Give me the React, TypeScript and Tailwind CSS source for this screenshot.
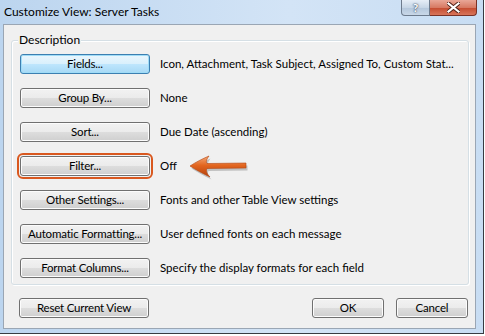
import React from "react";

type Row = { label: string; value: string; focused?: boolean; marked?: boolean };

const rows: Row[] = [
  { label: "Fields...", value: "Icon, Attachment, Task Subject, Assigned To, Custom Stat...", focused: true },
  { label: "Group By...", value: "None" },
  { label: "Sort...", value: "Due Date (ascending)" },
  { label: "Filter...", value: "Off", marked: true },
  { label: "Other Settings...", value: "Fonts and other Table View settings" },
  { label: "Automatic Formatting...", value: "User defined fonts on each message" },
  { label: "Format Columns...", value: "Specify the display formats for each field" },
];

const WinButton = ({
  label,
  width,
  focused = false,
  marked = false,
}: {
  label: string;
  width: string;
  focused?: boolean;
  marked?: boolean;
}) => (
  <div
    className={`${width} h-[20px] shrink-0 rounded-[3px] border flex items-center justify-center text-[11.5px] tracking-[-0.2px] whitespace-nowrap text-black ${
      focused
        ? "border-[#3c7fb1] bg-[linear-gradient(to_bottom,#eaf6fd_0%,#d9f0fc_50%,#bee6fd_51%,#a7d9f5_100%)] shadow-[inset_0_0_0_1px_#9fdcf7]"
        : "border-[#707070] bg-[linear-gradient(to_bottom,#f2f2f2_0%,#ebebeb_50%,#dddddd_51%,#cfcfcf_100%)] shadow-[inset_0_0_0_1px_#fcfcfc]"
    } ${marked ? "outline-2 outline-offset-1 outline-[#d9581f] shadow-[0_2px_3px_rgba(0,0,0,0.35)]" : ""}`}
  >
    {label}
  </div>
);

const Arrow = () => (
  <svg
    className="absolute left-[187px] top-[155px]"
    width="64"
    height="26"
    viewBox="0 0 64 26"
  >
    <defs>
      <linearGradient id="ag" x1="0" y1="0" x2="0" y2="1">
        <stop offset="0" stopColor="#f4a878" />
        <stop offset="0.45" stopColor="#e2651f" />
        <stop offset="1" stopColor="#b5400c" />
      </linearGradient>
    </defs>
    <path
      d="M3 11 C9 7 15 4 22 1 C19 5 19 7 20 8.5 L59 8 L59 13 L20 13.5 C19 15 19 18 23 22 C15 18 9 15 3 11 Z"
      fill="rgba(0,0,0,0.2)"
      transform="translate(1.5,2.5)"
    />
    <path
      d="M3 11 C9 7 15 4 22 1 C19 5 19 7 20 8.5 L59 8 L59 13 L20 13.5 C19 15 19 18 23 22 C15 18 9 15 3 11 Z"
      fill="url(#ag)"
      stroke="#b3440f"
      strokeWidth="0.6"
    />
  </svg>
);

export default function App() {
  return (
    <div className="relative w-[485px] h-[336px] bg-white font-['Lato',_'Liberation_Sans',_sans-serif]">
      <div className="w-[484px] h-[334px] border-r border-b border-[#383c42] bg-[linear-gradient(to_right,#bcd5ef,#d3e4f6_60%,#c8ddf3)] flex flex-col">
        {/* Title bar */}
        <div className="h-[24px] flex items-start">
          <div className="flex-1 pl-[4px] pt-[4px] text-[12px] leading-[16px] text-black">
            Customize View: Server Tasks
          </div>
          <div className="flex mr-[6px]">
            <div className="w-[29px] h-[16px] border border-t-0 border-[#6d7b8d] rounded-bl-[4px] bg-[linear-gradient(to_bottom,#e6eef7,#c7d6e6_50%,#b3c6db_51%,#c9d8e8)] flex items-center justify-center text-[12px] font-bold text-white [text-shadow:0_0_2px_#33415a,0_0_1px_#33415a]">
              ?
            </div>
            <div className="w-[47px] h-[16px] border border-t-0 border-l-0 border-[#7a3226] rounded-br-[4px] bg-[linear-gradient(to_bottom,#e9a797,#d77a63_50%,#c44a2e_51%,#d8755a)] flex items-center justify-center">
              <svg width="13" height="11" viewBox="0 0 13 11">
                <path d="M1.5 1.5 L11.5 9.5 M11.5 1.5 L1.5 9.5" stroke="#4a1d14" strokeWidth="4" strokeLinecap="square" />
                <path d="M1.5 1.5 L11.5 9.5 M11.5 1.5 L1.5 9.5" stroke="#ffffff" strokeWidth="2.2" strokeLinecap="square" />
              </svg>
            </div>
          </div>
        </div>

        {/* Content panel */}
        <div className="ml-[3px] mr-[7px] mb-[4px] flex-1 border border-[#9aa6b4] bg-[#f0f0f0] flex flex-col pl-[7px] pr-[6px] pt-[15px]">
          <div className="relative border border-[#d5dfe5] rounded-[3px] shadow-[inset_1px_1px_0_#ffffff,1px_1px_0_#ffffff] pl-[8px] pt-[13px] pb-[6px] flex flex-col gap-[14px]">
            <span className="absolute left-[6px] top-[-9px] px-[1px] bg-[#f0f0f0] text-[12px] leading-[16px] text-black">
              Description
            </span>
            {rows.map((r) => (
              <div key={r.label} className="flex items-center gap-[10px]">
                <WinButton label={r.label} width="w-[130px]" focused={r.focused} marked={r.marked} />
                <span className="text-[11.5px] text-black whitespace-nowrap">{r.value}</span>
              </div>
            ))}
          </div>

          <div className="flex items-center mt-[13px] pl-[8px] pr-[1px]">
            <WinButton label="Reset Current View" width="w-[130px]" />
            <div className="flex-1" />
            <WinButton label="OK" width="w-[72px]" />
            <div className="w-[12px]" />
            <WinButton label="Cancel" width="w-[72px]" />
          </div>
        </div>
      </div>
      <Arrow />
    </div>
  );
}
